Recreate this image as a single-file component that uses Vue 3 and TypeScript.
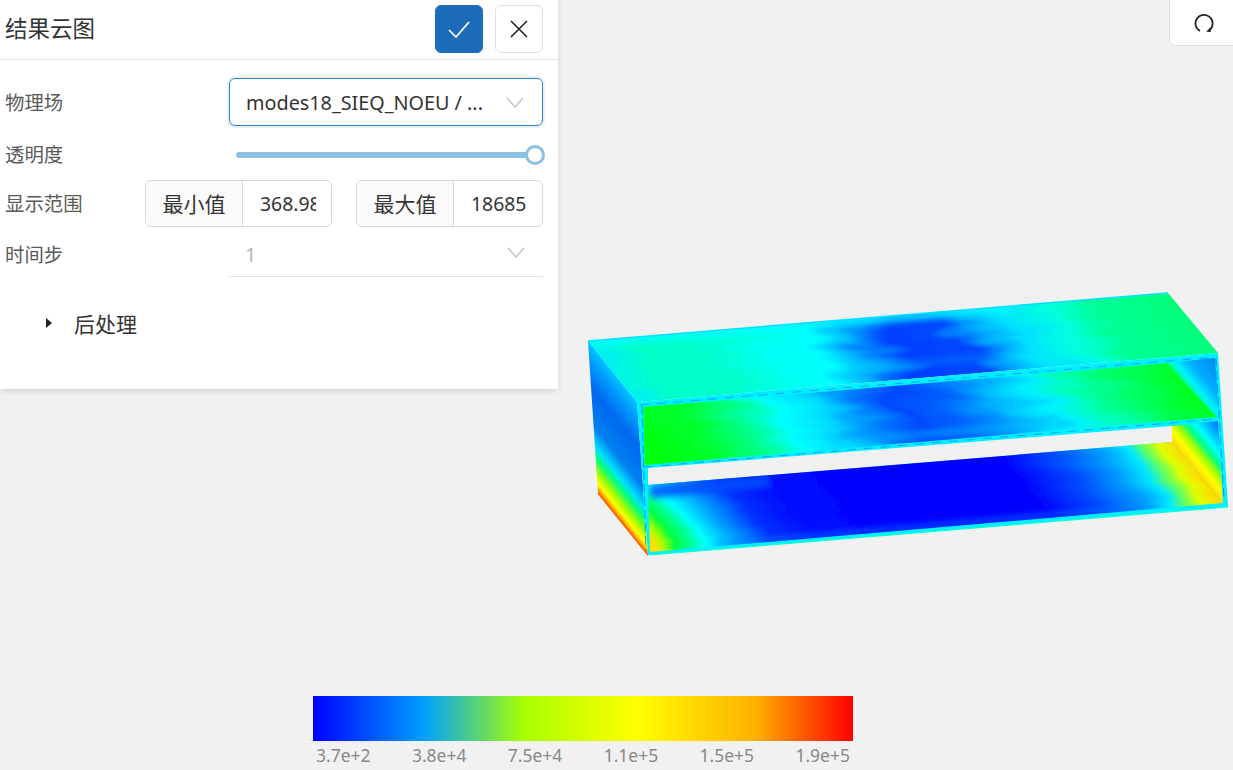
<script setup lang="ts">
interface Shade {
  id: string
  from: [number, number]
  to: [number, number]
  stops: [number, string][]
}

const ticks = ['3.7e+2', '3.8e+4', '7.5e+4', '1.1e+5', '1.5e+5', '1.9e+5']

const shades: Shade[] = [
  {
    id: 'roof',
    from: [637, 402],
    to: [1004, 96],
    stops: [
      [0, '#00f0f0'], [0.06, '#00ffc8'], [0.17, '#00ffc8'], [0.28, '#00fff0'], [0.345, '#00ffff'],
      [0.42, '#00b8ff'], [0.5, '#0040ff'], [0.6, '#0048ff'], [0.65, '#00a0ff'], [0.7, '#00e0ff'],
      [0.79, '#00ffe0'], [0.855, '#00ff98'], [1, '#00ff78']
    ]
  },
  {
    id: 'shelf',
    from: [645, 465],
    to: [1006, 164],
    stops: [
      [0, '#00ff00'], [0.13, '#00ff30'], [0.22, '#00ff90'], [0.28, '#00ffff'], [0.36, '#00d8ff'],
      [0.44, '#0078ff'], [0.5, '#0048ff'], [0.58, '#0068ff'], [0.66, '#00b0ff'], [0.74, '#00f0ff'],
      [0.82, '#00ffb0'], [0.9, '#00ff60'], [1, '#00ff20']
    ]
  },
  {
    id: 'floor',
    from: [650, 552],
    to: [1012, 250],
    stops: [
      [0, '#ffd800'], [0.02, '#ffe000'], [0.035, '#a0ff00'], [0.055, '#00ff40'], [0.08, '#00ff90'],
      [0.105, '#00ffff'], [0.15, '#00a0ff'], [0.21, '#0030ff'], [0.3, '#0008ff'], [0.7, '#0000ff'],
      [0.8, '#0050ff'], [0.87, '#00a0ff'], [0.91, '#00e8ff'], [0.935, '#60ff60'], [0.965, '#e0ff00'],
      [1, '#ffd800']
    ]
  },
  {
    id: 'side',
    from: [612, 371],
    to: [543, 426],
    stops: [
      [0, '#00c8ff'], [0.1, '#00a0ff'], [0.3, '#0068f0'], [0.55, '#0080f0'], [0.68, '#00e0ff'],
      [0.75, '#00ff80'], [0.85, '#a0ff00'], [0.92, '#ffff00'], [0.97, '#ff9000'], [1, '#ff3000']
    ]
  },
  {
    id: 'wallLow',
    from: [1172, 442],
    to: [1210, 411],
    stops: [
      [0, '#ffd800'], [0.15, '#ffff00'], [0.3, '#a0ff00'], [0.45, '#00ff80'], [0.6, '#00ffff'],
      [0.8, '#00b0ff'], [1, '#0070ff']
    ]
  },
  {
    id: 'wallHigh',
    from: [1167, 363],
    to: [1205, 331],
    stops: [
      [0, '#00ff90'], [0.15, '#00f0ff'], [0.35, '#00b0ff'], [0.7, '#0090f0'], [1, '#0060f0']
    ]
  }
]
</script>

<template>
  <div class="page">
    <svg class="model" width="1233" height="770" viewBox="0 0 1233 770">
      <defs>
        <linearGradient
          v-for="s in shades"
          :id="s.id"
          :key="s.id"
          gradientUnits="userSpaceOnUse"
          :x1="s.from[0]"
          :y1="s.from[1]"
          :x2="s.to[0]"
          :y2="s.to[1]"
        >
          <stop v-for="[at, color] in s.stops" :key="at" :offset="at" :stop-color="color" />
        </linearGradient>
        <filter id="soft" x="-30%" y="-200%" width="160%" height="500%">
          <feGaussianBlur stdDeviation="3" />
        </filter>
        <filter id="mottle" x="0" y="0" width="100%" height="100%">
          <feTurbulence type="fractalNoise" baseFrequency="0.012 0.07" numOctaves="3" seed="4" result="noise" />
          <feDisplacementMap in="SourceGraphic" in2="noise" scale="46" xChannelSelector="R" yChannelSelector="G" />
          <feGaussianBlur stdDeviation="1.2" />
        </filter>
        <filter id="mottleFine" x="0" y="0" width="100%" height="100%">
          <feTurbulence type="fractalNoise" baseFrequency="0.01 0.05" numOctaves="2" seed="9" result="noise" />
          <feDisplacementMap in="SourceGraphic" in2="noise" scale="20" xChannelSelector="R" yChannelSelector="G" />
          <feGaussianBlur stdDeviation="1" />
        </filter>
        <clipPath id="floorClip">
          <polygon points="648,485 1172,442 1223,503 650,552" />
        </clipPath>
        <clipPath id="shelfClip">
          <polygon points="643,407 1167,363 1217,417 645,465" />
        </clipPath>
        <clipPath id="roofClip">
          <polygon points="588,341 1168,293 1218,353 637,402" />
        </clipPath>
        <clipPath id="sideClip">
          <polygon points="588,341 637,402 648,555 598,493" />
        </clipPath>
      </defs>

      <g clip-path="url(#roofClip)">
        <rect x="500" y="230" width="800" height="230" fill="url(#roof)" filter="url(#mottle)" />
        <path d="M588 343 L1010 308" stroke="#00ffff" stroke-width="9" opacity="0.8" filter="url(#soft)" />
        <path d="M850 368 L1000 356" stroke="#00a0ff" stroke-width="6" opacity="0.4" filter="url(#soft)" />
      </g>
      <g clip-path="url(#sideClip)">
        <rect x="540" y="300" width="150" height="300" fill="url(#side)" />
      </g>

      <polygon points="637,402 1218,353 1228,507 648,555" fill="#00f0ff" />
      <polygon points="1167,363 1215,358 1219,417" fill="url(#wallHigh)" />

      <g clip-path="url(#shelfClip)">
        <rect x="560" y="320" width="740" height="190" fill="url(#shelf)" filter="url(#mottle)" />
        <path d="M830 442 L1040 424" stroke="#00c0ff" stroke-width="7" opacity="0.45" filter="url(#soft)" />
      </g>

      <polygon points="648,468 1172,426 1172,442 648,485" fill="#f1f1f1" />
      <polygon points="1172,426 1218,421 1223,503 1172,442" fill="url(#wallLow)" />

      <g clip-path="url(#floorClip)">
        <rect x="570" y="400" width="740" height="210" fill="url(#floor)" filter="url(#mottleFine)" />
        <path d="M650 492 L770 481" stroke="#0050ff" stroke-width="12" opacity="0.85" filter="url(#soft)" />
        <path d="M715 545 L1130 508" stroke="#0090ff" stroke-width="5" opacity="0.55" filter="url(#soft)" />
      </g>

      <path d="M640 405 L1216 357 M644 467 L1218 419" stroke="#0060ff" stroke-width="1" stroke-dasharray="9 8" opacity="0.55" fill="none" />
      <path d="M642 406 L646 552 M1216 358 L1224 500" stroke="#0070ff" stroke-width="1" stroke-dasharray="9 4" opacity="0.7" fill="none" />
      <path d="M588 341 L1168 293" stroke="#00e0ff" stroke-width="1.5" />
      <path d="M598 493 L648 555" stroke="#ff6000" stroke-width="1.5" />
      <path d="M650 555 L1228 507" stroke="#00ffd0" stroke-width="1" />
    </svg>

    <section class="panel">
      <header class="panel-head">
        <h2 class="panel-title">结果云图</h2>
        <div class="head-actions">
          <button class="action action-ok" type="button">
            <svg width="24" height="24" viewBox="0 0 24 24" fill="none" stroke="#fff" stroke-width="1.7">
              <path d="M2 13 L9 20 L22 5" />
            </svg>
          </button>
          <button class="action" type="button">
            <svg width="20" height="20" viewBox="0 0 20 20" fill="none" stroke="#222" stroke-width="1.6">
              <path d="M2 2 L18 18 M18 2 L2 18" />
            </svg>
          </button>
        </div>
      </header>

      <div class="form">
        <div class="row row-field">
          <label class="label">物理场</label>
          <div class="select select-open">
            <span class="select-text">modes18_SIEQ_NOEU / ...</span>
            <svg class="chevron" width="18" height="11" viewBox="0 0 18 11" fill="none" stroke="#c4c4c4" stroke-width="1.4">
              <path d="M1 1 L9 10 L17 1" />
            </svg>
          </div>
        </div>

        <div class="row row-opacity">
          <label class="label">透明度</label>
          <div class="slider">
            <div class="slider-track"></div>
            <div class="slider-handle"></div>
          </div>
        </div>

        <div class="row row-range">
          <label class="label">显示范围</label>
          <div class="range">
            <div class="range-group">
              <span class="addon">最小值</span>
              <span class="value"><span class="value-clip">368.98</span></span>
            </div>
            <div class="range-group">
              <span class="addon">最大值</span>
              <span class="value"><span class="value-clip">18685</span></span>
            </div>
          </div>
        </div>

        <div class="row row-step">
          <label class="label">时间步</label>
          <div class="select select-off">
            <span class="select-text">1</span>
            <svg class="chevron" width="18" height="11" viewBox="0 0 18 11" fill="none" stroke="#c4c4c4" stroke-width="1.4">
              <path d="M1 1 L9 10 L17 1" />
            </svg>
          </div>
        </div>

        <div class="collapse">
          <span class="caret"></span>
          <span class="collapse-title">后处理</span>
        </div>
      </div>
    </section>

    <button class="reset" type="button">
      <svg width="22" height="22" viewBox="0 0 22 22" fill="none" stroke="#222" stroke-width="1.7">
        <path d="M7 19 A8.6 8.6 0 1 1 16.6 18" />
        <path d="M13.2 19.8 L17.9 20 L17.4 15.2 Z" fill="#222" stroke="none" />
      </svg>
    </button>

    <div class="legend">
      <div class="legend-bar"></div>
      <div class="legend-ticks">
        <span v-for="t in ticks" :key="t">{{ t }}</span>
      </div>
    </div>
  </div>
</template>

<style>
html,
body {
  margin: 0;
  background: #f1f1f1;
  overflow: hidden;
}
</style>

<style scoped>
.page {
  position: relative;
  width: 1233px;
  height: 770px;
  overflow: hidden;
  background: #f1f1f1;
  font-family: "Noto Sans", "Noto Sans CJK SC", sans-serif;
  color: #333;
}
.model {
  position: absolute;
  left: 0;
  top: 0;
}
.panel {
  position: absolute;
  left: 0;
  top: 0;
  width: 558px;
  height: 389px;
  background: #fff;
  box-shadow: 0 2px 6px rgba(0, 0, 0, 0.12);
}
.panel-head {
  display: flex;
  align-items: center;
  justify-content: space-between;
  box-sizing: border-box;
  height: 60px;
  padding: 0 15px 2px 5px;
  border-bottom: 1px solid #e4e4e4;
}
.panel-title {
  margin: -3px 0 0;
  font-size: 22.5px;
  font-weight: 400;
  color: #333;
}
.head-actions {
  display: flex;
  gap: 12px;
}
.action {
  display: flex;
  align-items: center;
  justify-content: center;
  box-sizing: border-box;
  width: 48px;
  height: 48px;
  padding: 0;
  background: #fff;
  border: 1px solid #dedede;
  border-radius: 6px;
}
.action-ok {
  background: #1c6cb9;
  border-color: #1c6cb9;
}
.form {
  display: flex;
  flex-direction: column;
  padding: 18px 15px 0 5px;
}
.row {
  display: flex;
  align-items: center;
  justify-content: space-between;
}
.row-field {
  height: 48px;
}
.row-opacity {
  height: 46px;
  margin-top: 6px;
}
.row-range {
  height: 47px;
  margin-top: 2px;
}
.row-step {
  height: 45px;
  margin-top: 5px;
}
.label {
  margin-top: -2px;
  font-size: 19.4px;
  color: #595959;
}
.row-opacity .label {
  margin-top: -4px;
}
.select {
  display: flex;
  align-items: center;
  justify-content: space-between;
  box-sizing: border-box;
  width: 314px;
  height: 100%;
  padding: 0 18px 0 17px;
  font-size: 19.8px;
  border-radius: 6px;
}
.select-open {
  border: 1px solid #2f83cc;
  box-shadow: 0 0 0 2px rgba(28, 108, 185, 0.1);
}
.select-open .select-text {
  margin-left: -1px;
}
.select-off {
  color: #b5b5b5;
  border-bottom: 1px solid #e2e2e2;
  border-radius: 0;
}
.select-off .select-text {
  margin-left: -1px;
}
.select-off .chevron {
  margin-top: -3px;
}
.select-text {
  white-space: nowrap;
}
.slider {
  position: relative;
  width: 314px;
  height: 100%;
}
.slider-track {
  position: absolute;
  left: 7px;
  right: 8px;
  top: 20px;
  height: 6px;
  border-radius: 3px;
  background: #8cc0e0;
}
.slider-handle {
  position: absolute;
  right: -2px;
  top: 13px;
  box-sizing: border-box;
  width: 20px;
  height: 20px;
  border: 3px solid #8cc0e0;
  border-radius: 50%;
  background: #fff;
}
.range {
  display: flex;
  gap: 24px;
}
.range-group {
  display: flex;
  box-sizing: border-box;
  width: 187px;
  height: 47px;
  border: 1px solid #d9d9d9;
  border-radius: 6px;
  font-size: 19.4px;
}
.addon {
  display: flex;
  align-items: center;
  justify-content: center;
  box-sizing: border-box;
  width: 97px;
  padding-bottom: 2px;
  font-size: 21px;
  color: #333;
  background: #fafafa;
  border-right: 1px solid #d9d9d9;
  border-radius: 6px 0 0 6px;
}
.value {
  flex: 1;
  display: flex;
  align-items: center;
  justify-content: flex-end;
  padding-right: 15px;
}
.value-clip {
  display: block;
  width: 56px;
  overflow: hidden;
  white-space: nowrap;
}
.collapse {
  display: flex;
  align-items: center;
  margin-top: 31px;
  padding-left: 41px;
}
.caret {
  width: 0;
  height: 0;
  border-left: 6px solid #222;
  border-top: 5px solid transparent;
  border-bottom: 5px solid transparent;
}
.collapse-title {
  margin-left: 22px;
  font-size: 21px;
  color: #333;
}
.reset {
  position: absolute;
  right: -6px;
  top: -6px;
  display: flex;
  align-items: center;
  justify-content: center;
  box-sizing: border-box;
  width: 70px;
  height: 52px;
  padding: 6px 0 0 0;
  background: #fff;
  border: 1px solid #dedede;
  border-radius: 6px;
}
.legend {
  position: absolute;
  left: 313px;
  top: 696px;
  width: 540px;
}
.legend-bar {
  height: 45px;
  background: linear-gradient(
    to right,
    #0000ff 0%,
    #00a0ff 20.5%,
    #a8ff00 39%,
    #ffff00 60%,
    #ffb000 82%,
    #ff0000 100%
  );
}
.legend-ticks {
  display: flex;
  justify-content: space-between;
  padding: 2px 3px 0;
  font-size: 17.5px;
  line-height: 24px;
  color: #888;
}
</style>
